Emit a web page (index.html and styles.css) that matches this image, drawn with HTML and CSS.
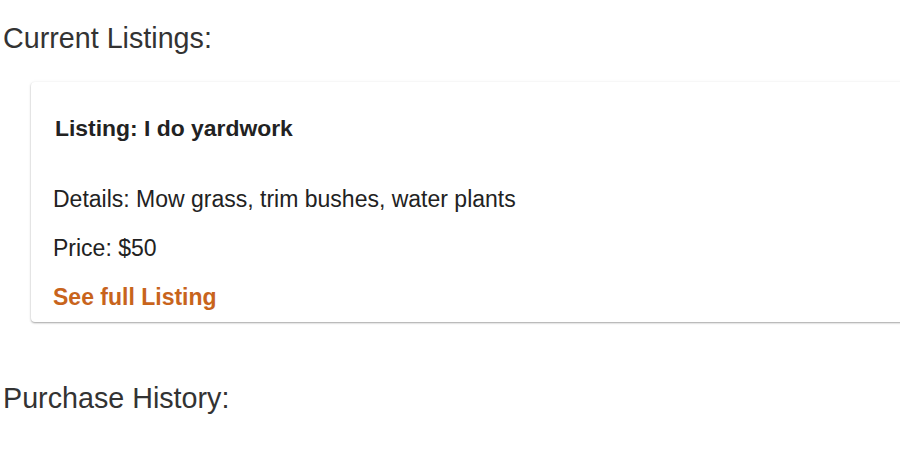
FILE: index.html
```html
<!DOCTYPE html>
<html>
<head>
<meta charset="utf-8">
<link rel="stylesheet" href="styles.css">
</head>
<body>
<div class="page">
  <h2 class="section-title">Current Listings:</h2>
  <div class="listings">
    <div class="card">
      <h3 class="card-title">Listing: I do yardwork</h3>
      <p class="card-text">Details: Mow grass, trim bushes, water plants</p>
      <p class="card-text">Price: $50</p>
      <a class="card-link" href="#">See full Listing</a>
    </div>
  </div>
  <h2 class="section-title history">Purchase History:</h2>
</div>
</body>
</html>
```
FILE: styles.css
```css
html, body {
  margin: 0;
  padding: 0;
  background: #fff;
}
body {
  font-family: "Liberation Sans", Arial, sans-serif;
  color: #222;
  overflow: hidden;
}
.page {
  padding: 22px 0 0 3px;
}
.section-title {
  margin: 0;
  font-size: 28.7px;
  font-weight: normal;
  line-height: 32px;
  color: #333;
}
.listings {
  padding: 28px 0 0 28px;
}
.card {
  width: 900px;
  border-radius: 4px;
  background: #fff;
  box-shadow: 0 1px 2px rgba(0,0,0,0.35), 0 0 4px rgba(0,0,0,0.04);
  padding: 26px 22px 10px 22px;
  box-sizing: border-box;
}
.card-title {
  margin: 0 0 36px 2px;
  font-size: 22.9px;
  font-weight: bold;
  line-height: 40px;
  color: #222;
}
.card-text {
  margin: 0 0 19px 0;
  font-size: 23px;
  line-height: 30px;
  color: #222;
}
.card-link {
  display: block;
  font-size: 23px;
  font-weight: bold;
  color: #c8641c;
  text-decoration: none;
  line-height: 30px;
}
.history {
  margin-top: 60px;
}
```
